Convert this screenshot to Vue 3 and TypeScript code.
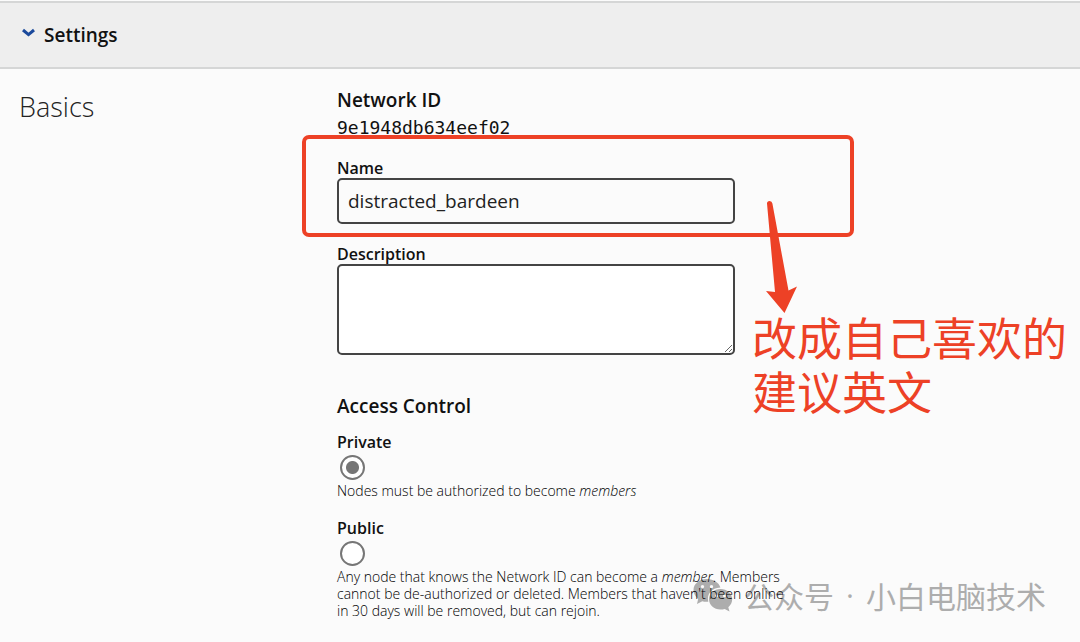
<script setup lang="ts">
import { ref } from 'vue'

const networkId = '9e1948db634eef02'
const name = ref<string>('distracted_bardeen')
const description = ref<string>('')
const access = ref<'private' | 'public'>('private')
const open = ref<boolean>(true)
</script>

<template>
  <main class="page">
    <header class="bar">
      <button class="toggle" type="button" :aria-expanded="open" @click="open = !open">
        <svg class="chevron" viewBox="0 0 16 12" aria-hidden="true">
          <path d="M3 2 8.500 6.600 14 2" />
        </svg>
        <span>Settings</span>
      </button>
    </header>

    <section v-if="open" class="content">
      <h1 class="title">Basics</h1>
      <form class="fields" @submit.prevent>
        <h2 class="heading">Network ID</h2>
        <code class="network-id">{{ networkId }}</code>

        <div class="field name-field">
          <label class="label" for="name">Name</label>
          <input id="name" v-model="name" class="box name-input" type="text" />
          <div class="highlight"></div>
          <svg class="arrow" viewBox="0 0 32 114" aria-hidden="true">
            <path d="M2 3.500Q2 1 4.600 1Q7 1 7.400 3.500L23.500 90.500L32 86.500L19.500 113L1 91L10 92Z" />
          </svg>
          <p class="note">改成自己喜欢的<br />建议英文</p>
        </div>

        <div class="field">
          <label class="label" for="description">Description</label>
          <textarea id="description" v-model="description" class="box description"></textarea>
        </div>

        <h2 class="heading access">Access Control</h2>
        <div class="option">
          <label class="label" for="private">Private</label>
          <input id="private" v-model="access" class="radio" type="radio" name="access" value="private" />
          <p class="help">Nodes must be authorized to become <em>members</em></p>
        </div>
        <div class="option">
          <label class="label" for="public">Public</label>
          <input id="public" v-model="access" class="radio" type="radio" name="access" value="public" />
          <p class="help">
            Any node that knows the Network ID can become a <em>member</em>. Members<br />
            cannot be de-authorized or deleted. Members that haven't been online<br />
            in 30 days will be removed, but can rejoin.
          </p>
        </div>
      </form>
    </section>

    <div class="watermark">
      <svg class="wechat" viewBox="0 0 40 34" aria-hidden="true">
        <path
          fill-rule="evenodd"
          d="M14 1C6.500 1 .5 5.700.5 12c0 3.500 1.800 6.600 4.700 8.700L4 26l5.300-2.800c1.500.4 3 .6 4.700.5h1.300C13.500 16 18.500 10.200 27.400 9.600 26 4.500 20.500 1 14 1ZM9.500 6.900a1.700 1.700 0 1 1 0 3.400 1.700 1.700 0 0 1 0-3.400Zm9 0a1.700 1.700 0 1 1 0 3.400 1.700 1.700 0 0 1 0-3.400Z"
        />
        <path
          fill-rule="evenodd"
          d="M27.500 11C21 11 16 15.500 16 21.300S21 31.500 27.500 31.500c1.500 0 2.900-.2 4.200-.6L36.500 33.500l-1.200-4.300c2.300-1.900 3.900-4.700 3.900-7.900C39.200 15.500 34 11 27.500 11Zm-4 5.300a1.500 1.500 0 1 1 0 3 1.500 1.500 0 0 1 0-3Zm8 0a1.500 1.500 0 1 1 0 3 1.500 1.500 0 0 1 0-3Z"
        />
      </svg>
      <span>公众号</span>
      <span class="dot">·</span>
      <span>小白电脑技术</span>
    </div>
  </main>
</template>

<style>
body {
  margin: 0;
  background: #fbfbfb;
}
</style>

<style scoped>
.page {
  position: relative;
  min-height: 100vh;
  overflow: hidden;
  box-sizing: border-box;
  padding-top: 1px;
  background: #fbfbfb;
  color: #111;
  font-family: "Noto Sans", "Open Sans", "Noto Sans CJK SC", sans-serif;
}

.bar {
  padding: 20px 20px 19px;
  border-top: 2px solid #d5d6d6;
  border-bottom: 2px solid #d5d6d6;
  background: #eee;
}

.toggle {
  display: flex;
  gap: 8px;
  padding: 0;
  border: 0;
  background: none;
  color: #111;
  font: 600 19px/25px "Open Sans", sans-serif;
}

.chevron {
  width: 16px;
  height: 12px;
  margin-top: 5px;
  fill: none;
  stroke: #1b4a9c;
  stroke-width: 3;
}

.content {
  position: relative;
  z-index: 1;
  display: grid;
  grid-template-columns: 318px minmax(0, 1fr);
  padding: 17px 20px 20px 19px;
}

.title {
  margin: 0;
  color: #222;
  font: 300 27px/42px "Open Sans", sans-serif;
}

.fields {
  display: flex;
  flex-direction: column;
}

.heading {
  margin: 0;
  font: 600 19px/28px "Open Sans", sans-serif;
}

.network-id {
  font: 18px/27px "DejaVu Sans Mono", monospace;
}

.field {
  position: relative;
  width: 398px;
  display: flex;
  flex-direction: column;
  margin-bottom: 20px;
}

.name-field {
  margin-top: 17px;
}

.label {
  font: 600 16px/20px "Open Sans", sans-serif;
}

.box {
  box-sizing: border-box;
  width: 100%;
  margin: 0;
  border: 2px solid #444;
  border-radius: 5px;
  padding: 0 9px;
  color: #222;
  font: 19px/26px "Open Sans", sans-serif;
}

.name-input {
  height: 46px;
  background: #fbfbfb;
}

.description {
  height: 91px;
  background: #fff;
  resize: vertical;
}

.highlight {
  position: absolute;
  left: -35px;
  top: -23px;
  width: 552px;
  height: 102px;
  box-sizing: border-box;
  border: 4px solid #ed4126;
  border-radius: 7px;
  pointer-events: none;
}

.arrow {
  position: absolute;
  left: 428px;
  top: 42px;
  width: 32px;
  height: 114px;
  fill: #ed4126;
}

.note {
  position: absolute;
  left: 415px;
  top: 152px;
  margin: 0;
  color: #ed4126;
  font: 45px/54px "Noto Sans CJK SC", sans-serif;
  white-space: nowrap;
}

.access {
  margin: 17px 0 12px;
}

.option {
  display: flex;
  flex-direction: column;
  align-items: flex-start;
  margin-bottom: 19px;
}

.radio {
  appearance: none;
  width: 25px;
  height: 25px;
  box-sizing: border-box;
  margin: 3px 3px 2px;
  border: 2px solid #767676;
  border-radius: 50%;
  background: #fff;
}

.radio:checked {
  background: radial-gradient(circle, #767676 6px, #fff 7px);
}

.help {
  margin: 0;
  color: #000;
  font: 300 14px/17px "Open Sans", sans-serif;
  white-space: nowrap;
}

.watermark {
  position: absolute;
  right: 34px;
  bottom: 41px;
  display: flex;
  align-items: center;
  color: #adadad;
  font: 30px/44px "Noto Sans CJK SC", sans-serif;
  white-space: nowrap;
  pointer-events: none;
}

.dot {
  width: 32px;
  font-family: "Open Sans", sans-serif;
  text-align: center;
}

.wechat {
  width: 40px;
  height: 34px;
  margin-right: 11px;
  fill: #adadad;
}
</style>
